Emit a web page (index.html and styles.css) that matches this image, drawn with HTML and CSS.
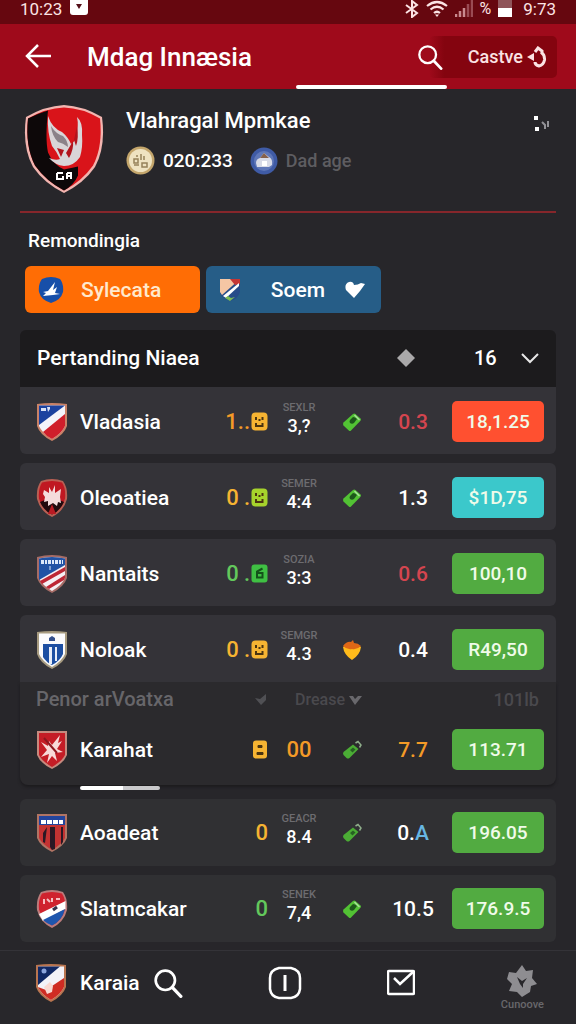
FILE: index.html
```html
<!DOCTYPE html>
<html lang="id">

<head>
    <meta charset="UTF-8">
    <meta name="viewport" content="width=device-width, initial-scale=1">
    <title>Mdag Innæsia</title>
    <link rel="stylesheet" href="styles.css">
</head>

<body>
    <!-- shared icons -->
    <svg class="defs" aria-hidden="true">
        <symbol id="search" viewBox="0 0 28 28">
            <circle cx="11.5" cy="11.5" r="9" fill="none" stroke="currentColor" stroke-width="2.5" />
            <path d="M18 18l8 8.5" fill="none" stroke="currentColor" stroke-width="3" stroke-linecap="round" />
        </symbol>
        <symbol id="face" viewBox="0 0 17 19">
            <rect x="0.5" y="0.5" width="16" height="18" rx="4" fill="currentColor" />
            <path d="M5 5v3M11.500 5v3M8.500 7v2" fill="none" stroke="#4a3410" stroke-width="2" />
            <path d="M5 11v3h6.500v-3" fill="none" stroke="#4a3410" stroke-width="2" />
        </symbol>
        <symbol id="face-b" viewBox="0 0 17 19">
            <rect x="0.5" y="0.5" width="16" height="18" rx="3" fill="currentColor" />
            <path d="M11.500 4.500L6 7.500v6h5.500V9H6" fill="none" stroke="#14521a" stroke-width="2" />
        </symbol>
        <symbol id="face-c" viewBox="0 0 17 19">
            <rect x="2" y="0.5" width="14" height="18" rx="3" fill="currentColor" />
            <path d="M7 5.500h4v2H7zM6 12.500h6v2H6z" fill="#4a3410" stroke="#4a3410" />
        </symbol>
        <symbol id="tag" viewBox="0 0 20 20">
            <path d="M1.500 10.500L11 2q1.200-1 2.400 0L18.500 6.500q1 1 0 2.200L9 18.500q-1 1-2.200 0l-5.300-5q-1-1.500 0-3z" fill="#52c234" />
            <path d="M8 8l3-3q2 0 4 2l-3 4q-2 1.500-4 0-1-1.500 0-3z" fill="#1d571b" />
            <path d="M12.500 3l5 5" stroke="#a7df9a" stroke-width="1.500" />
        </symbol>
        <symbol id="stick" viewBox="0 0 20 20">
            <path d="M1.500 12L11 4.500l5.500 4.500-9 9q-1.500 1-3 0L1.500 15q-1-1.500 0-3z" fill="#4bac35" />
            <path d="M8 10l3-2.500 2.500 2-3 3z" fill="#276023" />
            <path d="M13.500 3l2.500-1.500 3 3.500-1.500 2.500" fill="none" stroke="#8fae8b" stroke-width="1.500" />
        </symbol>
    </svg>

    <div class="status-bar">
        <span>10:23</span>
        <svg class="status-app" width="18" height="18" viewBox="0 0 18 18"><rect y="-3" width="18" height="18" rx="3" fill="#fff" /><path d="M6 4h6l-3 5z" fill="#54101a" /></svg>
        <div class="status-right">
            <svg width="14" height="18" viewBox="0 0 14 18"><path d="M1 5l11 8-5 4V1l5 4-11 8" fill="none" stroke="#fbe3e4" stroke-width="2" /></svg>
            <svg width="22" height="18" viewBox="0 0 22 18"><path d="M1 6q10-8 20 0M4.500 9.500q6.500-5.500 13 0M8 13q3-2.500 6 0" fill="none" stroke="#fbe3e4" stroke-width="2.200" /><path d="M9 14.500h4l-2 2.500z" fill="#fbe3e4" /></svg>
            <svg width="18" height="18" viewBox="0 0 18 18"><path d="M1 17v-3M5 17v-6M9 17V8" stroke="#c98a8f" stroke-width="2.500" /><path d="M13 17V4M17 17V0" stroke="#9a4b53" stroke-width="2.500" /></svg>
            <span class="percent">%</span>
            <svg width="14" height="18" viewBox="0 0 14 18"><path d="M0 0h14v8H0z" fill="#8f5459" /><path d="M0 8h14v9H0z" fill="#fff" /></svg>
            <span class="clock">9:73</span>
        </div>
    </div>

    <header class="app-bar">
        <button class="icon-btn" aria-label="Kembali">
            <svg width="28" height="28" viewBox="0 0 28 28"><path d="M26 13H3M13 2L2 13l11 11" fill="none" stroke="#fff" stroke-width="2.500" /></svg>
        </button>
        <h1>Mdag Innæsia</h1>
        <button class="icon-btn search-btn" aria-label="Cari"><svg width="26" height="26"><use href="#search" /></svg></button>
        <button class="account-btn">
            <span>Castve</span>
            <svg width="20" height="22" viewBox="0 0 20 22"><path d="M8 6l3-4 4 3v3M14 6q4 3 3.500 8-1 5-5.500 6-4-1-4-4" fill="none" stroke="#fbe3e4" stroke-width="3" /><path d="M0 11l7-4v8z" fill="#fbe3e4" /></svg>
        </button>
        <span class="tab-line"></span>
    </header>

    <main>
        <section class="profile">
            <svg width="80" height="90" viewBox="0 0 80 90">
                <path d="M40 1Q59 2 78 13q4 30-7 50Q60 79 40 89 20 79 9 63-2 43 2 13 21 2 40 1z" fill="#f2b5b0" />
                <path d="M40 3.500Q58 4 76 14.500q3 28-7 47Q58 77 40 86.500 22 77 11 61.500 1 42 4 14.500 22 4 40 3.500z" fill="#d9141a" />
                <path d="M4 14.500q10-5 20-8-3 28 0 42 5 12 16 17 10-2 14-3v9Q50 81 40 86.500 22 77 11 61.500 1 42 4 14.500z" fill="#0d0809" />
                <path d="M24 12q4 12 14 16 6 5 9 12 4-2 5-8 3-10 1-19 6 5 5 18 1 12-2 22-6 9-16 9-9-1-15-8 7 3 11 1-3-7-8-13-5-14-4-30z" fill="#d9d5d8" />
                <path d="M27 22q5 8 12 10 5 5 5 11-5-4-10-5-6-6-7-16z" fill="#8b8289" />
                <path d="M33 44l7 2-3 7zM49 37q1 8-4 17l-3-5zM53 22q2 12-1 20l-2-6z" fill="#b3131c" />
                <path d="M33 69h6M33 69v6h6v-3M43 69v6M43 69h4v6M47 72h-4" fill="none" stroke="#fff" stroke-width="2" />
            </svg>
            <div class="profile-info">
                <h2>Vlahragal Mpmkae</h2>
                <div class="profile-meta">
                    <svg width="29" height="29" viewBox="0 0 29 29"><circle cx="14.500" cy="14.500" r="14" fill="#c4a66c" /><circle cx="14.500" cy="14.500" r="11.500" fill="#efe3c1" /><path d="M8 13h4v4H8zM8 19h5M15 8v6M18 10v4M16 17h5v4h-5zM11 9v2" fill="none" stroke="#96825a" stroke-width="1.500" /></svg>
                    <span class="meta-num">020:233</span>
                    <svg width="28" height="28" viewBox="0 0 28 28"><circle cx="14" cy="14" r="13.500" fill="#3f5ba6" /><circle cx="14" cy="14" r="10" fill="#5f77b8" /><path d="M6 16q0-4 4-5l4-5 5 4q4 2 3 8l-3 2H7z" fill="#d8dbe7" /><path d="M10 11l4-5 5 5z" fill="#85614c" /><path d="M12 14h5v5h-5z" fill="#fff" /></svg>
                    <span class="meta-age">Dad age</span>
                </div>
            </div>
            <button class="icon-btn more-btn" aria-label="Lainnya">
                <svg width="20" height="20" viewBox="0 0 20 20"><path d="M4 2h4v4H4zM5 13h4v4H5z" fill="#fff" /><path d="M12 8l3 3v4M18 7v6" stroke="#929196" stroke-width="2" fill="none" /></svg>
            </button>
        </section>

        <h3>Remondingia</h3>
        <div class="filters">
            <button class="filter filter-orange">
                <svg width="26" height="28" viewBox="0 0 26 28"><path d="M4 3q9-4 18 0 4 5 3 13-2 8-12 11Q3 24 1 16 0 8 4 3z" fill="#174fa9" /><path d="M5 16l5-1 7-9-2 8 4-3-2 6 5 1-7 1-10 1 3-3z" fill="#fff" /></svg>
                <span>Sylecata</span>
            </button>
            <button class="filter filter-blue">
                <svg width="22" height="24" viewBox="0 0 22 24"><path d="M1 1h20v13q-2 7-10 9-9-3-10-9z" fill="#264b89" /><path d="M1 1h20L3 17l-2-3z" fill="#f5c6a4" /><path d="M11 1h10v5l-5 1z" fill="#c53635" /><path d="M20 5v3L7 20l-3-2z" fill="#fff" /><path d="M6 20l3-2 3 2 4-1-5 4z" fill="#7ebc55" /></svg>
                <span>Soem</span>
                <svg width="20" height="18" viewBox="0 0 20 18"><path d="M9 17L1 9Q-1 3 4 1q4-1 5 3 4 0 7-2l4 1-5 7z" fill="#fff" /></svg>
            </button>
        </div>

        <table class="matches">
            <thead>
                <tr>
                    <th class="title">Pertanding Niaea</th>
                    <th><svg width="20" height="20" viewBox="0 0 20 20"><path d="M10 1l9 9-9 9-9-9z" fill="#aaa9aa" /></svg></th>
                    <th>
                        <label class="count">
                            <select aria-label="Jumlah"><option>16</option></select>
                            <svg width="20" height="12" viewBox="0 0 20 12"><path d="M2 2l8 8 8-8" fill="none" stroke="#e8e8e8" stroke-width="2" /></svg>
                        </label>
                    </th>
                </tr>
            </thead>
            <tbody>
                <tr class="joined-top">
                    <td><svg class="crest" viewBox="0 0 32 40"><path d="M1 2q15-2 30 0v22q-3 9-15 15Q4 33 1 24z" fill="#c98267" /><path d="M3 3.500h26V24q-3 7-13 13Q6 31 3 24z" fill="#f4f4fa" /><path d="M3 3.500h26L3 23z" fill="#1c429f" /><path d="M29 12v12q-3 7-13 13-6-3-9-7z" fill="#d01f2b" /><path d="M5 6h5v3H5zM11 5h3v2l-2 3" fill="#dbe2f5" /></svg></td>
                    <td class="name">Vladasia</td>
                    <td class="odds orange">1..<svg class="face gold"><use href="#face" /></svg></td>
                    <td class="score"><small>SEXLR</small>3,?</td>
                    <td class="mark"><svg><use href="#tag" /></svg></td>
                    <td class="value red">0.3</td>
                    <td><button class="price price-red">18,1.25</button></td>
                </tr>
                <tr>
                    <td><svg class="crest" viewBox="0 0 32 40"><path d="M5 3q11-4 22 0 5 7 4 18-3 12-15 18Q4 33 1 21 0 10 5 3z" fill="#b96054" /><path d="M6 4.500q10-3 20 0 4 6 3 16-3 11-13 16Q6 31 3 20.500 2 11 6 4.500z" fill="#c01822" /><path d="M4 24l12-5 12 5q-4 9-12 12.500Q8 33 4 24z" fill="#210b0e" /><path d="M8 12l5 3V9l3 5 3-7v8l6-4-1 8 1 6-3-1-1 4-4-3-5 3v-5l-4 1 1-5-2-3z" fill="#f5dcdc" /><path d="M16 26l4 10h-8z" fill="#b91a23" /></svg></td>
                    <td class="name">Oleoatiea</td>
                    <td class="odds gold">0<span>.</span><svg class="face lime"><use href="#face" /></svg></td>
                    <td class="score"><small>SEMER</small>4:4</td>
                    <td class="mark"><svg><use href="#tag" /></svg></td>
                    <td class="value">1.3</td>
                    <td><button class="price price-cyan">$1D,75</button></td>
                </tr>
                <tr>
                    <td><svg class="crest" viewBox="0 0 32 40"><path d="M1 3q15-4 30 0v21q-3 9-15 15Q4 33 1 24z" fill="#a66c66" /><path d="M3 4.500q13-3 26 0V24q-3 7-13 13Q6 31 3 24z" fill="#f5f0f4" /><path d="M3 4.500q13-3 26 0V11L3 26z" fill="#2153a5" /><path d="M29 13v4L6 30l-2-3zM29 21v3l-1 2-15 9-3-2z" fill="#bd2735" /><path d="M5 8h22" stroke="#dbe8fa" stroke-width="4" stroke-dasharray="3 1 2 1" /><path d="M14 12v4" stroke="#dbe8fa" /></svg></td>
                    <td class="name">Nantaits</td>
                    <td class="odds green">0<span>.</span><svg class="face bright"><use href="#face-b" /></svg></td>
                    <td class="score"><small>SOZIA</small>3:3</td>
                    <td class="mark"></td>
                    <td class="value red">0.6</td>
                    <td><button class="price">100,10</button></td>
                </tr>
                <tr class="joined-bottom">
                    <td><svg class="crest" viewBox="0 0 32 40"><path d="M1 2q15-2 30 0v22q-3 9-15 15Q4 33 1 24z" fill="#a79b80" /><path d="M3 3.500h26V24q-3 7-13 13Q6 31 3 24z" fill="#fbfbfd" /><path d="M7 14h20v10q-3 7-11 11-6-3-9-8z" fill="#1d4fa2" /><path d="M13 17h3v17h-3zM19 17h2v14h-2z" fill="#e8edf8" /><path d="M13 11V8l3-2 3 2v3z" fill="#334f8c" /></svg></td>
                    <td class="name">Noloak</td>
                    <td class="odds gold">0<span>.</span><svg class="face"><use href="#face" /></svg></td>
                    <td class="score"><small>SEMGR</small>4.3</td>
                    <td class="mark"><svg viewBox="0 0 20 20"><path d="M1 7q5-4 9-2 4-2 9 2-1 8-9 13Q2 15 1 7z" fill="#ffbb1b" /><path d="M1 6q4-5 8-4l2-2 1 3q4 0 7 3-4 4-9 3-5 1-9-3z" fill="#df6716" /></svg></td>
                    <td class="value">0.4</td>
                    <td><button class="price">R49,50</button></td>
                </tr>
            </tbody>
            <tbody class="active-group">
                <tr class="sub-head">
                    <th class="sub-title">Penor arVoatxa</th>
                    <th><svg width="12" height="12" viewBox="0 0 12 12"><path d="M0 5l5 1 6-5v6l-5 5z" fill="#505054" /></svg></th>
                    <th class="sub-sort">Drease <svg width="13" height="10" viewBox="0 0 13 10"><path d="M0 1h4l2 3 3-3h4L6 10z" fill="#69686c" /></svg></th>
                    <th class="sub-total">101lb</th>
                </tr>
                <tr>
                    <td><svg class="crest" viewBox="0 0 32 40"><path d="M1 1h30v24q-3 8-15 14Q4 33 1 25z" fill="#c68a7e" /><path d="M3 3h26v22q-3 6-13 12Q6 31 3 25z" fill="#c51d26" /><path d="M24 5l-2 8 4-2-5 8 6 3-8 1 2 8-5-5-5 7 2-9-8 3 6-7-6-8 7 4 1-5 3 4z" fill="#f8dad8" /><path d="M8 8l13 15" stroke="#8e1820" stroke-width="2" /></svg></td>
                    <td class="name">Karahat<span class="progress"></span></td>
                    <td class="odds gold"><svg class="face"><use href="#face-c" /></svg></td>
                    <td class="score big orange">00</td>
                    <td class="mark"><svg><use href="#stick" /></svg></td>
                    <td class="value orange">7.7</td>
                    <td><button class="price">113.71</button></td>
                </tr>
            </tbody>
            <tbody class="dim">
                <tr>
                    <td><svg class="crest" viewBox="0 0 32 40"><path d="M1 1h30v24q-3 8-15 14Q4 33 1 25z" fill="#b07464" /><path d="M3 3h26v22q-3 6-13 12Q6 31 3 25z" fill="#c43232" /><path d="M3 3h26v9H3z" fill="#23449c" /><path d="M5 9h22" stroke="#fff" stroke-width="4" stroke-dasharray="5 1" /><path d="M14 14h5v22l-3 1-2-3zM25 14h2v15l-2 3zM7 20l4-6-2 16-2-1z" fill="#2b1824" /></svg></td>
                    <td class="name">Aoadeat</td>
                    <td class="odds gold">0</td>
                    <td class="score"><small>GEACR</small>8.4</td>
                    <td class="mark"><svg><use href="#stick" /></svg></td>
                    <td class="value">0.<span class="blue">A</span></td>
                    <td><button class="price">196.05</button></td>
                </tr>
                <tr>
                    <td><svg class="crest" viewBox="0 0 32 40"><path d="M5 3q11-4 22 0 5 7 4 18-3 12-15 18Q4 33 1 21 0 10 5 3z" fill="#bb7c7c" /><path d="M6 4.500q10-3 20 0 4 6 3 16-3 11-13 16Q6 31 3 20.500 2 11 6 4.500z" fill="#cf222e" /><path d="M29.500 12v8L7 32l-4-7z" fill="#fff" /><path d="M29 20q-3 12-13 16.500Q10 34 7 31z" fill="#1e56ae" /><path d="M8 10v5M11 10l3 3M16 9v4M20 10h4" stroke="#f6bfc1" stroke-width="2" /><path d="M17 21l4-3" stroke="#37304a" stroke-width="3" /></svg></td>
                    <td class="name">Slatmcakar</td>
                    <td class="odds green">0</td>
                    <td class="score"><small>SENEK</small>7,4</td>
                    <td class="mark"><svg><use href="#tag" /></svg></td>
                    <td class="value">10.5</td>
                    <td><button class="price">176.9.5</button></td>
                </tr>
            </tbody>
        </table>
    </main>

    <nav class="bottom-nav">
        <div class="nav-team">
            <a href="#"><svg class="crest" viewBox="0 0 32 40"><path d="M1 2q15-2 30 0v22q-3 9-15 15Q4 33 1 24z" fill="#b97550" /><path d="M3 3.500h26V24q-3 7-13 13Q6 31 3 24z" fill="#f3f2f8" /><path d="M3 3.500h22L3 22z" fill="#112864" /><path d="M29 15v9q-3 7-13 13Q6 31 3 24l8 3z" fill="#cf2c23" /><path d="M9 24l6-5 3 4-1 6-5 2z" fill="#f9d9d2" /><circle cx="9" cy="8" r="2.500" fill="#8ba4dc" /></svg>Karaia</a>
            <button class="icon-btn" aria-label="Cari"><svg width="30" height="30"><use href="#search" /></svg></button>
        </div>
        <button class="icon-btn" aria-label="Info">
            <svg width="34" height="34" viewBox="0 0 34 34"><path d="M11 2h12q9 2 9 10v11q-1 8-9 9H11q-8-1-9-9V12q0-8 9-10z" fill="none" stroke="#fff" stroke-width="2.500" /><path d="M17 9v16" stroke="#fff" stroke-width="3" /></svg>
        </button>
        <button class="icon-btn" aria-label="Pesan">
            <svg width="28" height="28" viewBox="0 0 28 28"><rect x="1" y="2" width="26" height="23" rx="1" fill="none" stroke="#fff" stroke-width="2.500" /><path d="M7 9l6 6L26 3" fill="none" stroke="#fff" stroke-width="2.500" /></svg>
        </button>
        <a class="nav-more" href="#">
            <svg width="30" height="32" viewBox="0 0 30 32"><path d="M15 0l4 6 7-1-1 8 5 6-6 2-1 6-8 5-5-5-8-1 3-7-5-5 2-7 7 1z" fill="#8e8d91" /><path d="M10 12l5 4 5-3-4 6v4l-3-4z" fill="#28272b" /></svg>
            <span>Cunoove</span>
        </a>
    </nav>
</body>

</html>
```
FILE: styles.css
```css
* {
    box-sizing: border-box;
}

body {
    margin: 0;
    min-height: 100vh;
    display: flex;
    flex-direction: column;
    background-color: #27262a;
    color: #fff;
    font-family: Roboto, "Liberation Sans", sans-serif;
    font-size: 21px;
    font-weight: 500;
}

h1,
h2,
h3 {
    margin: 0;
    font-weight: 500;
}

button,
select {
    border: none;
    padding: 0;
    background: none;
    color: inherit;
    font: inherit;
    cursor: pointer;
}

a {
    color: inherit;
    text-decoration: none;
}

svg {
    display: block;
    flex: none;
}

.defs {
    position: absolute;
    width: 0;
    height: 0;
}

/* status bar */
.status-bar {
    display: flex;
    align-items: center;
    height: 24px;
    padding: 0 20px 6px;
    background-color: #66070f;
    color: #fbe3e4;
    font-size: 17px;
    font-weight: 400;
    line-height: 18px;
}

.status-app {
    margin-left: 8px;
}

.status-right {
    display: flex;
    align-items: center;
    gap: 7px;
    margin-left: auto;
}

.percent {
    font-size: 16px;
}

.clock {
    margin-left: 4px;
}

/* app bar */
.app-bar {
    position: relative;
    display: flex;
    align-items: center;
    height: 65px;
    padding: 0 19px 0 25px;
    background-color: #9f0a1b;
}

.app-bar h1 {
    margin-left: 34px;
    font-size: 26px;
}

.search-btn {
    z-index: 1;
    margin-left: auto;
}

.account-btn {
    display: flex;
    align-items: center;
    justify-content: flex-end;
    gap: 4px;
    width: 128px;
    height: 42px;
    margin-left: -14px;
    padding-right: 10px;
    border-radius: 5px;
    background: linear-gradient(90deg, #9f0a1b, #84040f 12%);
    color: #fbe3e4;
    font-size: 18px;
}

.tab-line {
    position: absolute;
    right: 129px;
    bottom: 0;
    width: 151px;
    height: 4px;
    border-radius: 2px;
    background-color: #fff;
}

/* content */
main {
    flex: 1;
    padding: 0 20px 8px;
}

.profile {
    display: flex;
    height: 124px;
    padding: 15px 6px 0 4px;
    border-bottom: 2px solid #86262b;
}

.profile-info {
    flex: 1;
    margin-left: 22px;
}

.profile-info h2 {
    font-size: 22px;
    line-height: 34px;
}

.profile-meta {
    display: flex;
    align-items: center;
    gap: 8px;
    margin-top: 8px;
    font-size: 19px;
    line-height: 29px;
}

.meta-num {
    margin-right: 9px;
}

.meta-age {
    color: #5e5d61;
    font-size: 18px;
}

.more-btn {
    align-self: flex-start;
    margin-top: 10px;
}

h3 {
    padding: 14px 8px 12px;
    font-size: 19px;
    line-height: 27px;
}

.filters {
    display: flex;
    gap: 6px;
    padding-left: 5px;
}

.filter {
    display: flex;
    align-items: center;
    width: 175px;
    height: 47px;
    padding: 0 16px 0 13px;
    border-radius: 6px;
    font-size: 21px;
}

.filter-orange {
    gap: 17px;
    background-color: #ff6d05;
    color: #ffe9cd;
}

.filter-blue {
    gap: 20px;
    background-color: #265d87;
}

.filter-blue span {
    margin-left: auto;
}

/* matches */
.matches {
    display: block;
    margin-top: 17px;
}

.matches thead,
.matches tbody {
    display: grid;
    gap: 9px;
}

.matches tr {
    display: grid;
    grid-template-columns: 32px 1fr 60px 38px 44px 54px 92px;
    align-items: center;
    column-gap: 12px;
    height: 67px;
    padding: 2px 12px 0 16px;
    border-radius: 6px;
    background-color: #343338;
}

.matches th,
.matches td {
    padding: 0;
    font-weight: 500;
    text-align: left;
}

.matches thead tr {
    grid-template-columns: 1fr 54px 92px;
    column-gap: 19px;
    height: 57px;
    padding-top: 0;
    padding-bottom: 2px;
    border-radius: 6px 6px 0 0;
    background-color: #1c1b1d;
}

.matches thead svg {
    margin: 0 auto;
}

.matches .title {
    padding-left: 1px;
}

.count {
    display: flex;
    align-items: center;
    justify-content: flex-end;
    gap: 22px;
    padding-right: 4px;
}

.matches .count svg {
    margin: 0;
}

.count select {
    appearance: none;
    width: 24px;
    font-size: 20px;
}

.matches .joined-top {
    border-radius: 0 0 6px 6px;
}

.matches .joined-bottom {
    border-radius: 6px 6px 0 0;
}

.crest {
    width: 32px;
    height: 40px;
}

.matches .odds {
    display: flex;
    align-items: center;
    justify-content: flex-end;
    gap: 1px;
    font-size: 22px;
}

.odds span {
    margin-left: 4px;
}

.face {
    width: 17px;
    height: 19px;
}

.matches .score {
    font-size: 18px;
    line-height: 20px;
    text-align: center;
}

.score small {
    display: block;
    color: #6d6c70;
    font-size: 11px;
    line-height: 16px;
}

.score:not(.big) {
    margin-top: -8px;
}

.matches .big {
    font-size: 22px;
}

.mark svg {
    width: 20px;
    height: 20px;
    margin: 0 auto;
}

.matches .value {
    font-size: 21px;
    text-align: center;
}

.price {
    display: block;
    width: 92px;
    height: 41px;
    border-radius: 5px;
    background-color: #52ab41;
    color: #f0fbe9;
    font-size: 19px;
}

.price-red {
    background-color: #ff5030;
}

.price-cyan {
    background-color: #3bc8cb;
}

.orange {
    color: #f39a27;
}

.gold {
    color: #f6b432;
}

.lime {
    color: #a6d32c;
}

.green {
    color: #63c85c;
}

.bright {
    color: #3fc043;
}

.red {
    color: #d4454f;
}

.blue {
    color: #67b6e2;
}

/* open group */
.matches .active-group {
    gap: 0;
    margin-bottom: 14px;
    padding-bottom: 2px;
    border-radius: 0 0 8px 8px;
    background-color: #2b2a2d;
    box-shadow: 0 2px 3px #1c1b1e;
}

.matches .active-group tr {
    padding-top: 0;
    background: none;
}

.matches .active-group .sub-head {
    grid-template-columns: 1fr 12px 66px 155px;
    column-gap: 28px;
    height: 34px;
    color: #4a494d;
    font-size: 16px;
    white-space: nowrap;
}

.matches .sub-title {
    color: #67666a;
    font-size: 20px;
}

.sub-sort svg {
    display: inline-block;
}

.matches .sub-total {
    padding-right: 5px;
    font-size: 18px;
    text-align: right;
}

.name {
    position: relative;
}

.progress {
    position: absolute;
    left: 0;
    top: 48px;
    width: 80px;
    height: 4px;
    border-radius: 2px;
    background: linear-gradient(90deg, #fff 54%, #c9c9cb 54%);
}

.matches .dim tr {
    padding-top: 0;
    background-color: #303033;
}

/* bottom navigation */
.bottom-nav {
    position: sticky;
    bottom: 0;
    display: flex;
    align-items: center;
    justify-content: space-between;
    height: 74px;
    padding: 0 32px 10px 35px;
    border-top: 1px solid #343338;
    background-color: #28272b;
}

.nav-team,
.nav-team a {
    display: flex;
    align-items: center;
    gap: 13px;
}

.nav-more {
    display: flex;
    flex-direction: column;
    align-items: center;
    margin-top: 12px;
    color: #69686c;
    font-size: 11px;
    line-height: 16px;
}
```
